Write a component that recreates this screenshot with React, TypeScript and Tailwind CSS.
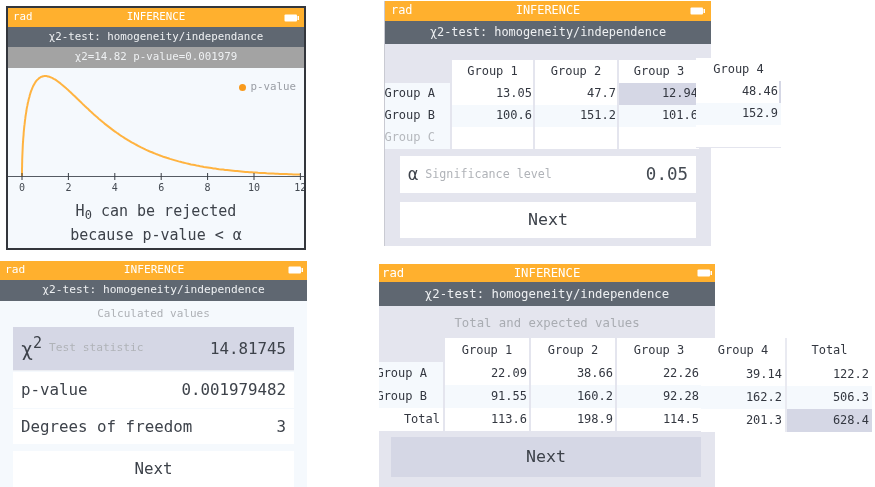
const fontStack = "font-['DejaVu_Sans_Mono','Liberation_Mono',monospace]";

function chiPath() {
  const pts: string[] = [];
  for (let i = 0; i <= 240; i++) {
    const x = (i / 240) ** 2 * 12;
    const y = 0.3989 * Math.sqrt(x) * Math.exp(-x / 2);
    pts.push(`${(14 + x * 23.2).toFixed(1)},${(108 - y * 413).toFixed(1)}`);
  }
  return "M" + pts.join(" L");
}

function Battery() {
  return (
    <svg width="15" height="8" viewBox="0 0 15 8" className="shrink-0">
      <rect x="0.5" y="0.5" width="12.5" height="7" rx="1" fill="#fff" />
      <rect x="13.5" y="2" width="1.5" height="4" fill="#fff" />
    </svg>
  );
}

function Bars({ h1, h2, size, title, sub, pad }: { h1: string; h2: string; size: string; title: string; sub: string; pad: string }) {
  return (
    <>
      <div className={`${h1} bg-[#ffb02e] flex items-center justify-between ${pad} text-white ${size}`}>
        <span className="w-10">rad</span>
        <span>{title}</span>
        <span className="w-10 flex justify-end">
          <Battery />
        </span>
      </div>
      <div className={`${h2} bg-[#5f6771] flex items-center justify-center text-[#eef0f2] ${size}`}>{sub}</div>
    </>
  );
}

type Cell = { t: string; sel?: boolean; alt?: boolean; pr?: string };

function Row({ widths, cells, h, pr }: { widths: string[]; cells: Cell[]; h: string; pr: string }) {
  return (
    <div className={`flex gap-x-[2px] ${h}`}>
      {cells.map((c, i) => (
        <div
          key={i}
          className={`${widths[i]} ${c.sel ? "bg-[#d5d7e5]" : c.alt ? "bg-[#f5f9fd]" : "bg-white"} ${c.pr ?? pr} pb-[2px] flex items-center justify-end overflow-hidden whitespace-nowrap text-[12px] text-[#333740]`}
        >
          {c.t}
        </div>
      ))}
    </div>
  );
}

function Screen1() {
  const ticks = [0, 2, 4, 6, 8, 10, 12];
  return (
    <div className="absolute left-[6px] top-[6px] w-[300px] h-[244px] border-2 border-[#33363c] bg-[#f5f9fd] flex flex-col overflow-hidden">
      <Bars h1="h-[19px]" h2="h-[20px]" size="text-[10.8px]" title="INFERENCE" sub="χ2-test: homogeneity/independance" pad="px-[5px]" />
      <div className="h-[21px] bg-[#a3a3a3] flex items-center justify-center text-[10.8px] text-[#eef0f2]">χ2=14.82 p-value=0.001979</div>
      <div className="relative h-[112px]">
        <svg width="296" height="112" viewBox="0 0 296 112" className="block">
          <path d={chiPath()} fill="none" stroke="#ffb340" strokeWidth="2" />
          <line x1="0" x2="296" y1="108.5" y2="108.5" stroke="#555b63" />
          {ticks.map((t) => (
            <line key={t} x1={14 + t * 23.2} x2={14 + t * 23.2} y1="105" y2="112" stroke="#3a3f46" />
          ))}
        </svg>
        <div className="absolute right-[8px] top-[11px] flex items-center gap-[4px] text-[10.8px] text-[#9a9ea5]">
          <span className="w-[7px] h-[7px] rounded-full bg-[#f89a1c]" />
          p-value
        </div>
      </div>
      <div className="h-[14px] flex text-[10px] text-[#444a52] pl-[0px]">
        {ticks.map((t) => (
          <span key={t} className="w-[46.4px] text-center shrink-0 first:ml-[-9.2px]">
            {t}
          </span>
        ))}
      </div>
      <div className="flex-1 flex flex-col items-center pt-[5px] text-[#3d424a] text-[15px] leading-[24px]">
        <div>
          H<sub className="text-[12px]">0</sub> can be rejected
        </div>
        <div>because p-value &lt; α</div>
      </div>
    </div>
  );
}

function Screen2() {
  const w = ["w-[65px]", "w-[81px]", "w-[82px]", "w-[80px]"];
  return (
    <div className="absolute left-[384px] top-[1px] w-[327px] h-[245px] bg-[#e4e5ee] border-l border-[#c9cad2] flex flex-col">
      <Bars h1="h-[20px]" h2="h-[23px]" size="text-[11.9px]" title="INFERENCE" sub="χ2-test: homogeneity/independence" pad="px-[6px]" />
      <div className="h-[16px]" />
      <div className="flex flex-col">
        <div className="flex gap-x-[2px] h-[23px] text-[12px]">
          <div className={w[0]} />
          {["Group 1", "Group 2", "Group 3"].map((g, i) => (
            <div key={g} className={`${w[i + 1]} bg-white pb-[2px] flex items-center justify-center text-[#333740]`}>{g}</div>
          ))}
        </div>
        <Row widths={w} h="h-[22px]" pr="pr-[1px]" cells={[{ t: "Group A", alt: true, pr: "pr-[15px]" }, { t: "13.05" }, { t: "47.7" }, { t: "12.94", sel: true }]} />
        <Row widths={w} h="h-[22px]" pr="pr-[1px]" cells={[{ t: "Group B", alt: true, pr: "pr-[15px]" }, { t: "100.6", alt: true }, { t: "151.2", alt: true }, { t: "101.6", alt: true }]} />
        <div className="flex gap-x-[2px] h-[22px] text-[12px]">
          <div className={`${w[0]} bg-[#f5f9fd] pr-[15px] pb-[2px] flex items-center justify-end overflow-hidden whitespace-nowrap text-[#b5b8bd]`}>Group C</div>
          <div className={`${w[1]} bg-white`} />
          <div className={`${w[2]} bg-white`} />
          <div className={`${w[3]} bg-white`} />
        </div>
      </div>
      <div className="mx-[15px] mt-[7px] h-[37px] bg-white flex items-center justify-between px-[8px]">
        <div className="flex items-center gap-[7px]">
          <span className="text-[17px] text-[#3d424a]">α</span>
          <span className="text-[11.7px] text-[#b0b3b8]">Significance level</span>
        </div>
        <span className="text-[17.5px] text-[#444a52]">0.05</span>
      </div>
      <div className="mx-[15px] mt-[9px] h-[36px] bg-white flex items-center justify-center text-[16.6px] text-[#3d424a]">Next</div>
      <div className="absolute left-[311px] top-[57px] w-[85px] h-[90px] bg-white border-b border-[#e4e5ee] flex flex-col text-[12px] text-[#333740]">
        <div className="h-[23px] pb-[2px] flex items-center justify-center">Group 4</div>
        <div className="h-[22px] pb-[3px] pr-[1px] flex items-center justify-end border-r-2 border-[#d5d7e5]">48.46</div>
        <div className="h-[22px] pb-[3px] pr-[1px] flex items-center justify-end border-r-2 border-[#f5f9fd] bg-[#f5f9fd]">152.9</div>
        <div className="h-[22px]" />
      </div>
    </div>
  );
}

function Screen3() {
  return (
    <div className="absolute left-0 top-[261px] w-[307px] h-[226px] bg-[#f5f9fd] flex flex-col overflow-hidden">
      <Bars h1="h-[19px]" h2="h-[22px]" size="text-[11.2px]" title="INFERENCE" sub="χ2-test: homogeneity/independence" pad="pl-[5px] pr-[4px]" />
      <div className="h-[26px] flex items-center justify-center text-[11px] text-[#aeb1b6]">Calculated values</div>
      <div className="mx-[13px] h-[45px] bg-[#d5d7e5] flex items-center justify-between px-[8px] border-b border-[#eceef3]">
        <div className="flex items-center gap-[7px]">
          <span className="text-[20px] leading-[24px] text-[#3d424a]">
            χ<sup className="text-[15px]">2</sup>
          </span>
          <span className="text-[11.2px] text-[#b0b3b8]">Test statistic</span>
        </div>
        <span className="text-[15.8px] text-[#3d424a]">14.81745</span>
      </div>
      <div className="mx-[13px] mt-[1px] h-[36px] bg-white flex items-center justify-between px-[8px] text-[15.8px] text-[#3d424a]">
        <span>p-value</span>
        <span>0.001979482</span>
      </div>
      <div className="mx-[13px] mt-[1px] h-[36px] bg-white flex items-center justify-between px-[8px] text-[15.8px] text-[#3d424a]">
        <span>Degrees of freedom</span>
        <span>3</span>
      </div>
      <div className="mx-[13px] mt-[7px] h-[36px] bg-white flex items-center justify-center text-[15.8px] text-[#3d424a]">Next</div>
    </div>
  );
}

function Screen4() {
  const w = ["w-[64px]", "w-[84px]", "w-[84px]", "w-[84px]"];
  const g4 = [
    ["Group 4", "Total"],
    ["39.14", "122.2"],
    ["162.2", "506.3"],
    ["201.3", "628.4"],
  ];
  return (
    <div className="absolute left-[379px] top-[264px] w-[336px] h-[223px] bg-[#e4e5ee] flex flex-col">
      <Bars h1="h-[18px]" h2="h-[24px]" size="text-[12.3px]" title="INFERENCE" sub="χ2-test: homogeneity/independence" pad="px-[3px]" />
      <div className="h-[32px] pt-[2px] flex items-center justify-center text-[12.3px] text-[#a9acb2]">Total and expected values</div>
      <div className="flex flex-col">
        <div className="flex gap-x-[2px] h-[24px]">
          <div className={w[0]} />
          {["Group 1", "Group 2", "Group 3"].map((g, i) => (
            <div key={g} className={`${w[i + 1]} bg-white pb-[1px] flex items-center justify-center text-[12px] text-[#333740]`}>{g}</div>
          ))}
        </div>
        <Row widths={w} h="h-[23px]" pr="pr-[2px]" cells={[{ t: "Group A", alt: true, pr: "pr-[16px]" }, { t: "22.09" }, { t: "38.66" }, { t: "22.26" }]} />
        <Row widths={w} h="h-[23px]" pr="pr-[2px]" cells={[{ t: "Group B", alt: true, pr: "pr-[16px]" }, { t: "91.55", alt: true }, { t: "160.2", alt: true }, { t: "92.28", alt: true }]} />
        <Row widths={w} h="h-[23px]" pr="pr-[2px]" cells={[{ t: "Total", pr: "pr-[3px]" }, { t: "113.6" }, { t: "198.9" }, { t: "114.5" }]} />
      </div>
      <div className="ml-[12px] mt-[6px] h-[40px] w-[310px] bg-[#d5d7e5] flex items-center justify-center text-[16.6px] text-[#3d424a]">Next</div>
      <div className="absolute left-[322px] top-[74px] flex gap-x-[2px] bg-[#e9eaf1] text-[12px] text-[#333740]">
        {[0, 1].map((col) => (
          <div key={col} className={`flex flex-col ${col === 0 ? "w-[84px]" : "w-[85px]"} bg-white`}>
            {g4.map((r, i) => (
              <div
                key={i}
                className={`flex items-center pb-[1px] ${i === 0 ? "justify-center h-[25px]" : "justify-end h-[23px] pr-[3px]"} ${i === 2 ? "bg-[#f5f9fd]" : ""} ${col === 1 && i === 3 ? "bg-[#d5d7e5]" : ""}`}
              >
                {r[col]}
              </div>
            ))}
          </div>
        ))}
      </div>
    </div>
  );
}

export default function App() {
  return (
    <div className={`relative w-[875px] h-[487px] bg-white overflow-hidden ${fontStack} blur-[0.5px]`}>
      <Screen1 />
      <Screen2 />
      <Screen3 />
      <Screen4 />
    </div>
  );
}
